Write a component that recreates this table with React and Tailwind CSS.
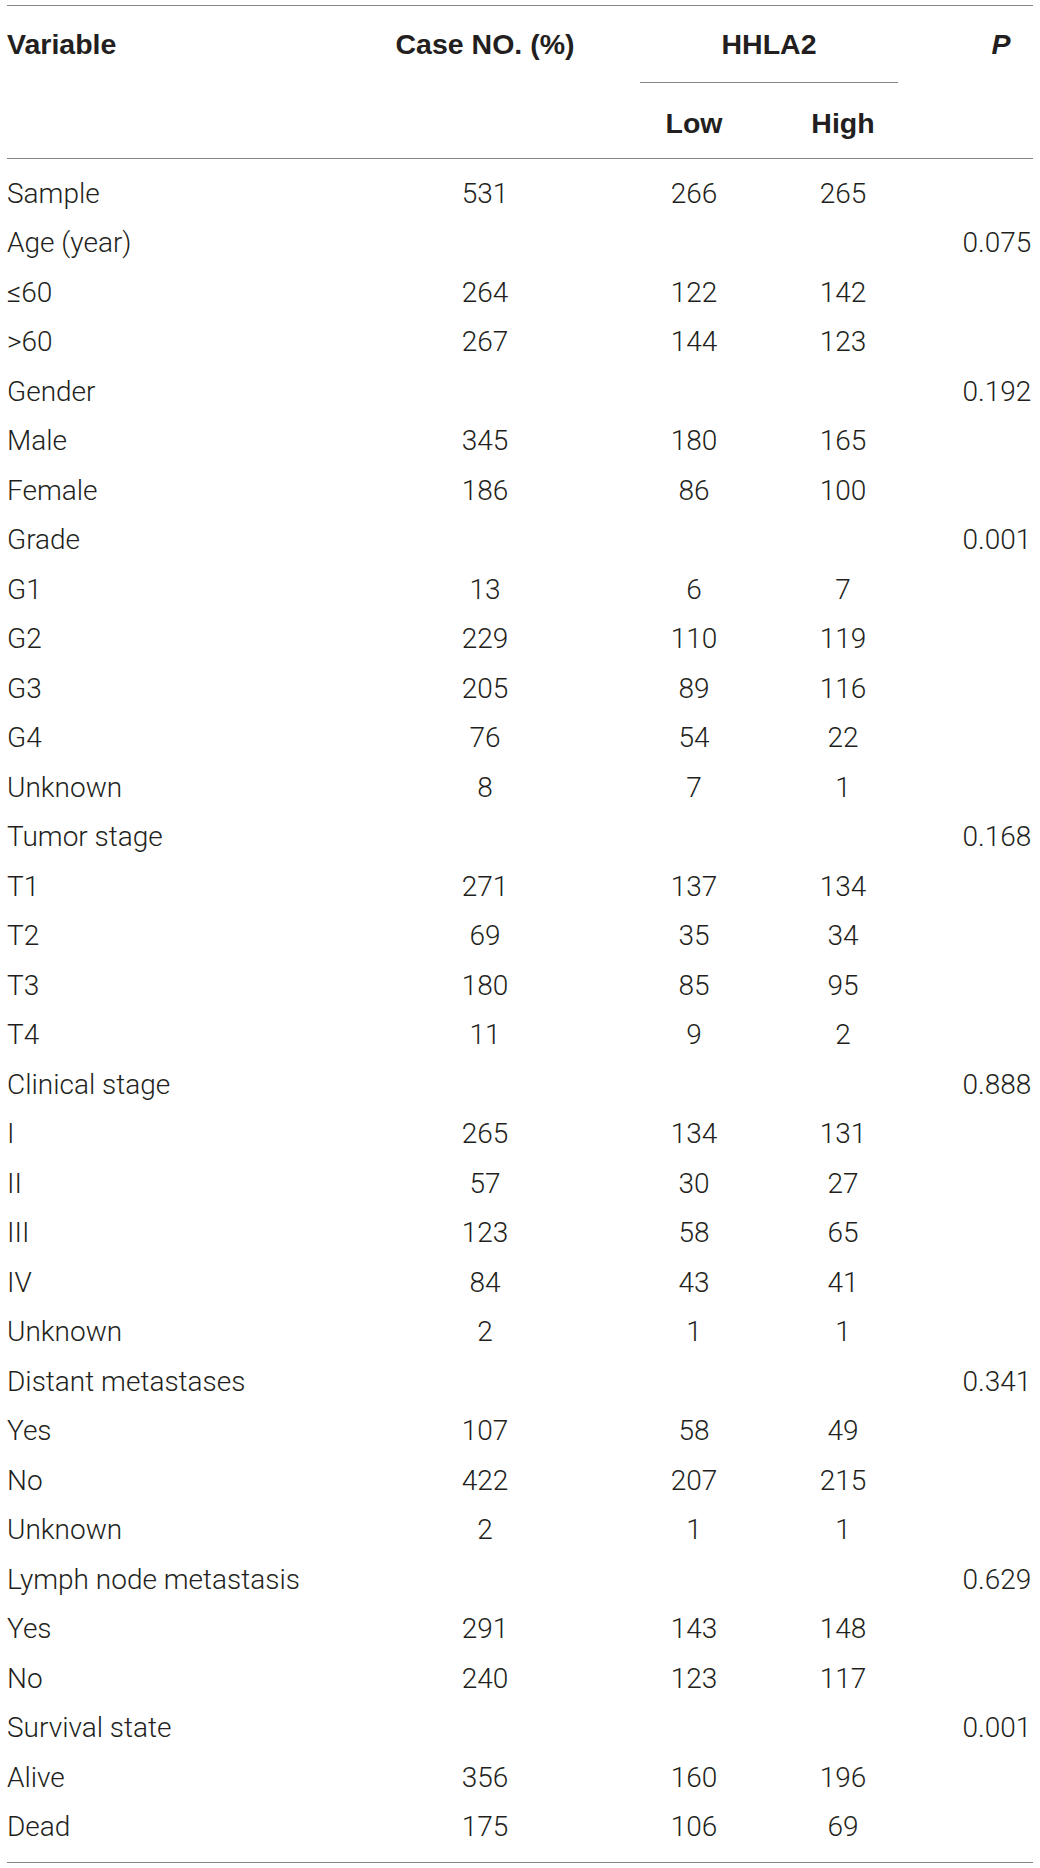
import React from "react";

const rows = [
  ["Sample", "531", "266", "265", ""],
  ["Age (year)", "", "", "", "0.075"],
  ["\u226460", "264", "122", "142", ""],
  [">60", "267", "144", "123", ""],
  ["Gender", "", "", "", "0.192"],
  ["Male", "345", "180", "165", ""],
  ["Female", "186", "86", "100", ""],
  ["Grade", "", "", "", "0.001"],
  ["G1", "13", "6", "7", ""],
  ["G2", "229", "110", "119", ""],
  ["G3", "205", "89", "116", ""],
  ["G4", "76", "54", "22", ""],
  ["Unknown", "8", "7", "1", ""],
  ["Tumor stage", "", "", "", "0.168"],
  ["T1", "271", "137", "134", ""],
  ["T2", "69", "35", "34", ""],
  ["T3", "180", "85", "95", ""],
  ["T4", "11", "9", "2", ""],
  ["Clinical stage", "", "", "", "0.888"],
  ["I", "265", "134", "131", ""],
  ["II", "57", "30", "27", ""],
  ["III", "123", "58", "65", ""],
  ["IV", "84", "43", "41", ""],
  ["Unknown", "2", "1", "1", ""],
  ["Distant metastases", "", "", "", "0.341"],
  ["Yes", "107", "58", "49", ""],
  ["No", "422", "207", "215", ""],
  ["Unknown", "2", "1", "1", ""],
  ["Lymph node metastasis", "", "", "", "0.629"],
  ["Yes", "291", "143", "148", ""],
  ["No", "240", "123", "117", ""],
  ["Survival state", "", "", "", "0.001"],
  ["Alive", "356", "160", "196", ""],
  ["Dead", "175", "106", "69", ""],
];

function Row({ r }) {
  return (
    <div className="flex h-[49.5px] items-center whitespace-nowrap">
      <div className="w-[403px]">{r[0]}</div>
      <div className="w-[150px] text-center">{r[1]}</div>
      <div className="ml-[60px] w-[148px] text-center">{r[2]}</div>
      <div className="w-[150px] text-center">{r[3]}</div>
      <div className="ml-[43px] w-[72px] text-center">{r[4]}</div>
    </div>
  );
}

export default function App() {
  return (
    <div className="w-[1040px] h-[1868px] bg-white px-[7px] pt-[5px] text-[#231f20]">
      <div className="border-t border-b border-[#858585]">
        <div className="flex border-b border-[#858585] font-['Liberation_Sans',Arial,sans-serif] font-bold text-[28.5px] whitespace-nowrap">
          <div className="w-[403px] h-[76px] flex items-center">Variable</div>
          <div className="w-[150px] h-[76px] flex items-center justify-center">Case NO. (%)</div>
          <div className="ml-[60px] w-[298px] flex flex-col">
            <div className="h-[76px] flex items-center justify-center">HHLA2</div>
            <div className="mx-[20px] h-px bg-[#858585]" />
            <div className="flex h-[75px] items-center pt-[5px]">
              <div className="w-[148px] text-center">Low</div>
              <div className="w-[150px] text-center">High</div>
            </div>
          </div>
          <div className="ml-[43px] w-[72px] h-[76px] flex items-center justify-center pl-[8px] italic">P</div>
        </div>
        <div className="pt-[10px] pb-[10px] font-['Roboto',sans-serif] font-light text-[28px]">
          {rows.map((r, i) => (
            <Row key={i} r={r} />
          ))}
        </div>
      </div>
    </div>
  );
}
